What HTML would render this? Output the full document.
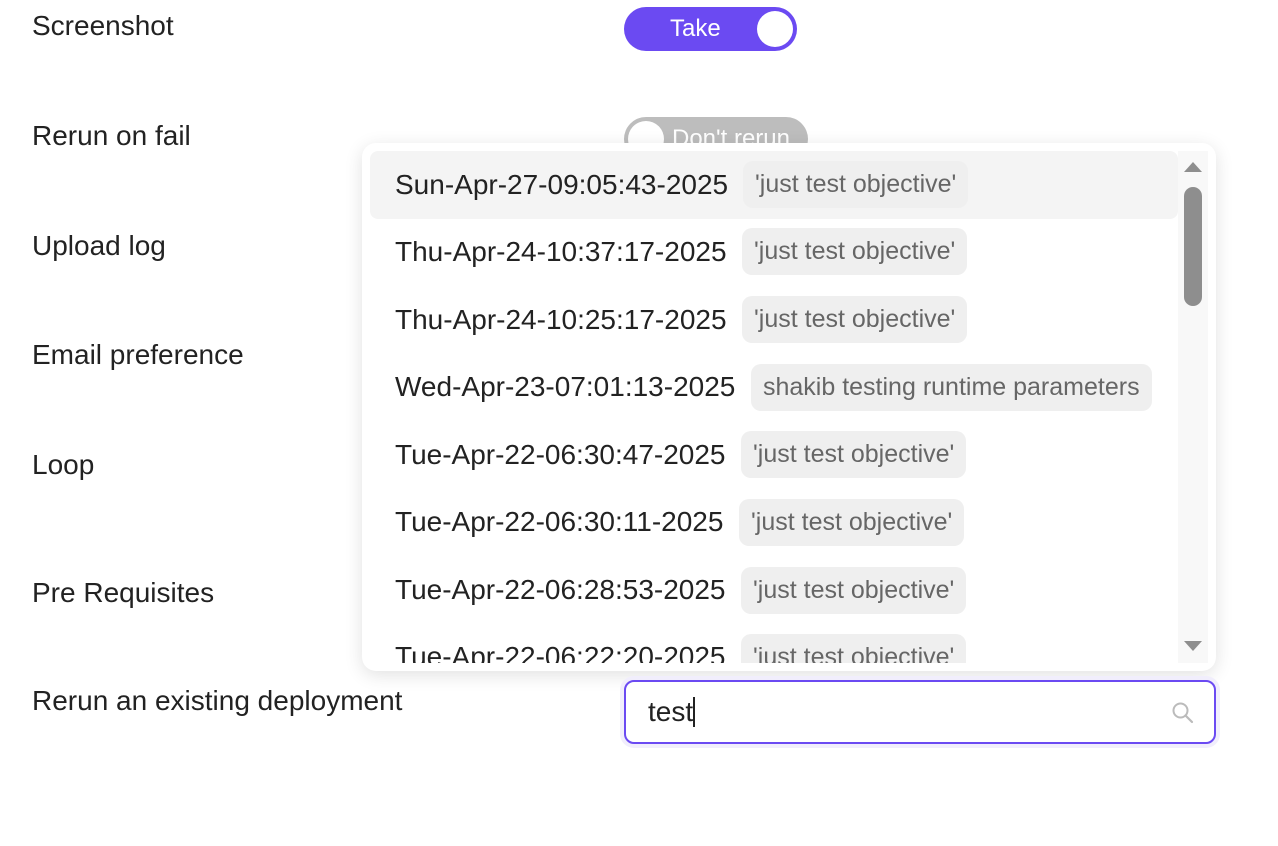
<!DOCTYPE html>
<html><head><style>
body{margin:0;width:1278px;height:846px;background:#fff;font-family:"Liberation Sans",sans-serif;position:relative;overflow:hidden}
.l{position:absolute;left:32px;font-size:28px;color:#222;line-height:30px}
.dd{position:absolute;left:362px;top:143px;width:854px;height:528px;background:#fff;border-radius:14px;box-shadow:0 4px 18px rgba(0,0,0,.12);overflow:hidden}
.row{position:absolute;left:8px;width:808px;height:68px;border-radius:8px}
.d{position:absolute;left:25px;font-size:28px;color:#222;line-height:30px}
.t{position:absolute;height:47px;border-radius:10px;background:#efefef;color:#666;font-size:25px;line-height:47px;padding:0 12px;box-sizing:border-box}
</style></head><body>
<div class="l" style="top:11px">Screenshot</div>
<div class="l" style="top:121px">Rerun on fail</div>
<div class="l" style="top:231px">Upload log</div>
<div class="l" style="top:340px">Email preference</div>
<div class="l" style="top:450px">Loop</div>
<div class="l" style="top:578px">Pre Requisites</div>
<div class="l" style="top:686px">Rerun an existing deployment</div>

<div style="position:absolute;left:624px;top:7px;width:173px;height:44px;border-radius:22px;background:#6b4af2">
<span style="position:absolute;left:46px;top:8px;color:#fff;font-size:24px">Take</span>
<div style="position:absolute;right:4px;top:4px;width:36px;height:36px;border-radius:50%;background:#fff"></div></div>
<div style="position:absolute;left:624px;top:117px;width:184px;height:44px;border-radius:22px;background:#bdbdbd">
<div style="position:absolute;left:4px;top:4px;width:36px;height:36px;border-radius:50%;background:#fff"></div>
<span style="position:absolute;left:48px;top:8px;color:#fff;font-size:24px">Don't rerun</span></div>

<div class="dd">
<div class="row" style="top:8px;background:#f4f4f4"></div>
<div style="position:absolute;left:816px;top:8px;width:30px;height:512px;background:#f8f8f8"></div>
<div style="position:absolute;left:822px;top:44px;width:18px;height:119px;border-radius:9px;background:#8e8e8e"></div>
<div style="position:absolute;left:822px;top:19px;width:0;height:0;border-left:9px solid transparent;border-right:9px solid transparent;border-bottom:10px solid #8e8e8e"></div>
<div style="position:absolute;left:822px;top:498px;width:0;height:0;border-left:9px solid transparent;border-right:9px solid transparent;border-top:10px solid #8e8e8e"></div>
<div style="position:absolute;left:0;top:0;width:816px;height:520px;overflow:hidden">
<div class="d" style="top:27px;left:33px">Sun-Apr-27-09:05:43-2025</div><div class="t" style="left:381px;top:18px">'just test objective'</div>
<div class="d" style="top:94px;left:33px">Thu-Apr-24-10:37:17-2025</div><div class="t" style="left:380px;top:85px">'just test objective'</div>
<div class="d" style="top:162px;left:33px">Thu-Apr-24-10:25:17-2025</div><div class="t" style="left:380px;top:153px">'just test objective'</div>
<div class="d" style="top:229px;left:33px">Wed-Apr-23-07:01:13-2025</div><div class="t" style="left:389px;top:221px">shakib testing runtime parameters</div>
<div class="d" style="top:297px;left:33px">Tue-Apr-22-06:30:47-2025</div><div class="t" style="left:379px;top:288px">'just test objective'</div>
<div class="d" style="top:364px;left:33px">Tue-Apr-22-06:30:11-2025</div><div class="t" style="left:377px;top:356px">'just test objective'</div>
<div class="d" style="top:432px;left:33px">Tue-Apr-22-06:28:53-2025</div><div class="t" style="left:379px;top:424px">'just test objective'</div>
<div class="d" style="top:499px;left:33px">Tue-Apr-22-06:22:20-2025</div><div class="t" style="left:379px;top:491px">'just test objective'</div>
</div></div>

<div style="position:absolute;left:624px;top:680px;width:592px;height:64px;box-sizing:border-box;border:2px solid #6b4af2;border-radius:10px;box-shadow:0 0 0 4px #f1eefc;background:#fff">
<span style="position:absolute;left:22px;top:14px;font-size:28px;color:#222">test<span style="display:inline-block;width:2px;height:30px;background:#222;vertical-align:-6px"></span></span>
<svg style="position:absolute;left:545px;top:19px" width="24" height="24" viewBox="0 0 24 24"><circle cx="9.5" cy="9.5" r="7" fill="none" stroke="#bbb" stroke-width="2"/><path d="M14.5 14.5L21 21" stroke="#bbb" stroke-width="2.2" stroke-linecap="round"/></svg>
</div>
</body></html>
